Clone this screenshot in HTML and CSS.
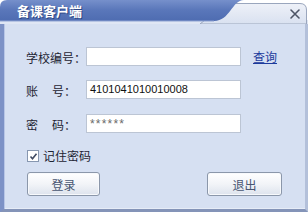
FILE: index.html
```html
<!DOCTYPE html>
<html lang="zh">
<head>
<meta charset="utf-8">
<link rel="stylesheet" href="styles.css">
</head>
<body>
<div class="win">
  <div class="titlebar">
    <svg class="tb-bg" width="308" height="24" viewBox="0 0 308 24">
      <defs>
        <linearGradient id="dk" x1="0" y1="0" x2="0" y2="1">
          <stop offset="0" stop-color="#7690cb"/>
          <stop offset="0.45" stop-color="#5a77ba"/>
          <stop offset="1" stop-color="#4d6bb0"/>
        </linearGradient>
        <linearGradient id="lt" x1="0" y1="0" x2="0" y2="1">
          <stop offset="0" stop-color="#eef1f8"/>
          <stop offset="1" stop-color="#d9e1f0"/>
        </linearGradient>
      </defs>
      <rect x="0" y="20" width="308" height="4" fill="#dfe6f4"/>
      <path d="M226,3.5 L300,3.5 Q306.5,3.5 306.5,10 L306.5,24 L200,24 Z" fill="url(#lt)" stroke="#9aa6bd" stroke-width="1"/>
      <path d="M0,22 L0,7 Q0,0 7,0 L244,0 C232,0 230,21 214,21 L0,21 Z" fill="url(#dk)"/>
      <path d="M0,21 L214,21" stroke="#8ea2d2" stroke-width="1"/>
      <path d="M291,10 L299,18 M299,10 L291,18" stroke="#4d5566" stroke-width="1.6" stroke-linecap="round"/>
    </svg>
    <span class="title">备课客户端</span>
  </div>
  <div class="content">
    <div class="rows">
      <div class="row">
        <span class="lbl">学校编号：</span>
        <span class="field"></span>
        <a class="link" href="#">查询</a>
      </div>
      <div class="row">
        <span class="lbl"><span class="c1">账</span>号：</span>
        <span class="field">4101041010010008</span>
      </div>
      <div class="row row3">
        <span class="lbl"><span class="c1">密</span>码：</span>
        <span class="field pw">******</span>
      </div>
    </div>
    <div class="remember">
      <span class="cb"><svg width="9" height="9" viewBox="0 0 9 9"><path d="M1.5,4.5 L3.5,6.8 L7.5,1.8" fill="none" stroke="#3f4a62" stroke-width="1.6"/></svg></span>
      <span class="rtext">记住密码</span>
    </div>
    <div class="buttons">
      <span class="btn">登录</span>
      <span class="btn">退出</span>
    </div>
  </div>
</div>
</body>
</html>
```

FILE: styles.css
```css
html, body {
  margin: 0;
  padding: 0;
  background: #ffffff;
}
.win {
  width: 308px;
  height: 212px;
  display: flex;
  flex-direction: column;
  font-family: "Noto Sans CJK SC", sans-serif;
  font-size: 12px;
  color: #1e2433;
}
.titlebar {
  position: relative;
  height: 24px;
  flex: none;
}
.tb-bg {
  position: absolute;
  left: 0;
  top: 0;
}
.title {
  position: relative;
  display: block;
  padding: 3px 0 0 17px;
  font-size: 13px;
  line-height: 16px;
  font-weight: bold;
  color: #ffffff;
  text-shadow: 1px 1px 0 #2e4784;
}
.content {
  flex: 1;
  box-sizing: border-box;
  background: #d6e0f2;
  border-left: 4px solid #7d92c6;
  border-right: 3px solid #b3c0da;
  border-bottom: 3px solid #8494b8;
  box-shadow: inset 1px 0 0 #b8c6e6, inset 0 -1px 0 #e6ecf7;
  padding: 23px 0 0 22px;
  display: flex;
  flex-direction: column;
}
.rows {
  display: flex;
  flex-direction: column;
  gap: 14px;
}
.row {
  display: flex;
  align-items: center;
  height: 19px;
}
.row3 {
  margin-top: 1px;
}
.lbl {
  width: 60px;
  flex: none;
  line-height: 19px;
  padding-top: 1px;
  box-sizing: border-box;
  color: #1e2433;
}
.c1 {
  display: inline-block;
  width: 26px;
}
.field {
  width: 155px;
  height: 19px;
  box-sizing: border-box;
  background: #ffffff;
  border: 1px solid #bcc5d4;
  font-family: "Liberation Sans", Arial, sans-serif;
  font-size: 11px;
  line-height: 17px;
  padding-left: 3px;
  color: #111111;
}
.pw {
  color: #6a6a6a;
  font-size: 12px;
  letter-spacing: 1.2px;
  line-height: 19px;
}
.link {
  margin-left: 12px;
  color: #1c3a9c;
  text-decoration: underline;
  font-size: 12px;
  line-height: 14px;
}
.remember {
  display: flex;
  align-items: center;
  margin-top: 17px;
  margin-left: 1px;
  height: 12px;
}
.cb {
  width: 12px;
  height: 12px;
  box-sizing: border-box;
  border: 1px solid #8797b0;
  background: #ffffff;
  display: flex;
  align-items: center;
  justify-content: center;
  flex: none;
}
.rtext {
  margin-left: 4px;
  font-size: 12px;
  line-height: 12px;
  color: #1e2433;
}
.buttons {
  display: flex;
  justify-content: space-between;
  margin-top: 10px;
  margin-left: 1px;
  width: 255px;
}
.btn {
  width: 73px;
  height: 24px;
  box-sizing: border-box;
  border: 1px solid #8b97aa;
  border-radius: 3px;
  background: linear-gradient(#ffffff, #f2f4f8 50%, #dde3ed);
  box-shadow: inset 0 0 0 1px #f7f9fc;
  display: flex;
  align-items: center;
  justify-content: center;
  color: #485672;
  font-size: 12px;
}
.btn:last-child {
  width: 75px;
}
```
